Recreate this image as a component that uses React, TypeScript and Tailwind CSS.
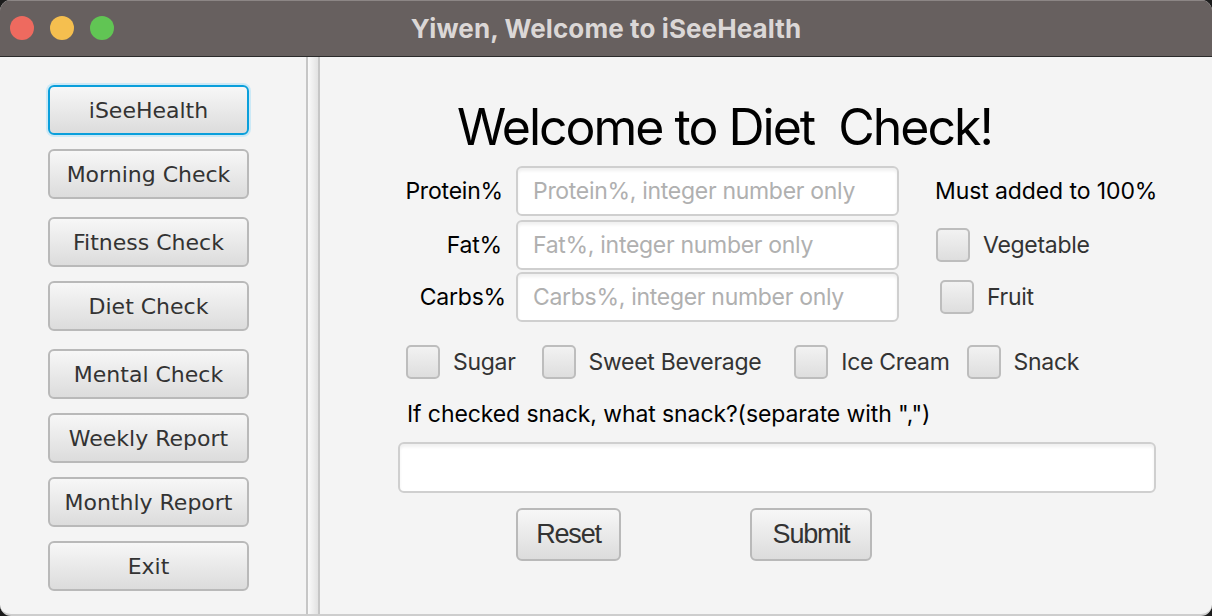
import React from 'react';

const sideButtons = [
  'iSeeHealth',
  'Morning Check',
  'Fitness Check',
  'Diet Check',
  'Mental Check',
  'Weekly Report',
  'Monthly Report',
  'Exit',
];

// gaps between left buttons (px above each one)
const sideGaps = ['mt-[28px]', 'mt-[14px]', 'mt-[18px]', 'mt-[14px]', 'mt-[18px]', 'mt-[14px]', 'mt-[14px]', 'mt-[14px]'];

function CheckBox({ label, className = '' }: { label: string; className?: string }) {
  return (
    <div className={`flex items-center ${className}`}>
      <div className="w-[34px] h-[34px] rounded-[5px] border-2 border-[#bdbdbd] bg-gradient-to-b from-[#f2f2f2] to-[#dedede]" />
      <span className="ml-[13px] text-[23px] tracking-[-0.3px] text-[#333] leading-none">{label}</span>
    </div>
  );
}

function Field({ placeholder, className = '' }: { placeholder?: string; className?: string }) {
  return (
    <div
      className={`h-[50px] rounded-[6px] border-2 border-[#cfcfcf] bg-white shadow-[inset_0_3px_3px_rgba(0,0,0,0.06)] flex items-center px-[15px] text-[23px] tracking-[-0.3px] text-[#b0b0b0] ${className}`}
    >
      {placeholder}
    </div>
  );
}

export default function App() {
  return (
    <div className="w-[1212px] h-[616px] bg-[#1c1c1c] overflow-hidden">
      <div className="w-full h-full rounded-[11px] overflow-hidden bg-[#f4f4f4] flex flex-col border-b-2 border-[#cdcdcd]">
        {/* Title bar */}
        <div className="h-[57px] shrink-0 bg-[#67605f] border-t border-[#8c8685] border-b border-b-[#2b2b2b] relative flex items-center justify-center">
          <div className="absolute left-[10px] top-[15px] flex gap-[16px]">
            <div className="w-[24px] h-[24px] rounded-full bg-[#ee6a5f]" />
            <div className="w-[24px] h-[24px] rounded-full bg-[#f5bf4f]" />
            <div className="w-[24px] h-[24px] rounded-full bg-[#61c554]" />
          </div>
          <span className="text-[26px] font-bold text-[#dbd7d6] font-['Inter',sans-serif] tracking-[0.1px]">
            Yiwen, Welcome to iSeeHealth
          </span>
        </div>

        <div className="flex flex-1">
          {/* Left menu */}
          <div className="w-[306px] shrink-0 flex flex-col items-start pl-[48px] font-['DejaVu_Sans',sans-serif]">
            {sideButtons.map((b, i) => (
              <div
                key={b}
                className={`${sideGaps[i]} w-[201px] h-[50px] shrink-0 rounded-[6px] border-2 flex items-center justify-center text-[22px] text-[#333] bg-gradient-to-b from-[#f7f7f7] to-[#dcdcdc] ${
                  i === 0 ? 'border-[#0a9fdb] shadow-[0_0_0_2px_#cce9f6]' : 'border-[#b9b9b9]'
                }`}
              >
                {b}
              </div>
            ))}
          </div>

          {/* Split divider */}
          <div className="flex shrink-0">
            <div className="w-[2px] bg-[#c6c6c6]" />
            <div className="w-[10px] bg-gradient-to-r from-[#fafafa] to-[#e2e2e2]" />
            <div className="w-[2px] bg-[#c6c6c6]" />
          </div>

          {/* Diet check form */}
          <div className="flex-1 flex flex-col font-['Inter',sans-serif] text-black">
            <h1 className="mt-[40px] ml-[137px] text-[50px] leading-[60px] font-normal tracking-[-2px]">
              Welcome to Diet&nbsp; Check!
            </h1>

            <div className="mt-[9px] flex items-center h-[50px]">
              <span className="w-[183px] text-right text-[23px] tracking-[-0.2px]">Protein%</span>
              <Field className="ml-[13px] w-[383px]" placeholder="Protein%, integer number only" />
              <span className="ml-[36px] text-[23px] tracking-[-0.1px]">Must added to 100%</span>
            </div>
            <div className="mt-[4px] flex items-center h-[50px]">
              <span className="w-[182px] text-right text-[23px] tracking-[-0.2px]">Fat%</span>
              <Field className="ml-[14px] w-[383px]" placeholder="Fat%, integer number only" />
              <CheckBox className="ml-[37px]" label="Vegetable" />
            </div>
            <div className="mt-[2px] flex items-center h-[50px]">
              <span className="w-[186px] text-right text-[23px] tracking-[-0.2px]">Carbs%</span>
              <Field className="ml-[10px] w-[383px]" placeholder="Carbs%, integer number only" />
              <CheckBox className="ml-[41px]" label="Fruit" />
            </div>

            <div className="mt-[23px] flex items-center h-[34px] pl-[86px]">
              <CheckBox label="Sugar" />
              <CheckBox className="ml-[26px]" label="Sweet Beverage" />
              <CheckBox className="ml-[33px]" label="Ice Cream" />
              <CheckBox className="ml-[17px]" label="Snack" />
            </div>

            <p className="mt-[22px] ml-[87px] text-[23px] leading-[26px] tracking-[-0.1px]">
              If checked snack, what snack?(separate with &quot;,&quot;)
            </p>

            <Field className="mt-[15px] ml-[78px] w-[758px] h-[51px]" />

            <div className="mt-[15px] flex font-['Liberation_Sans',sans-serif]">
              <div className="ml-[196px] w-[105px] h-[53px] rounded-[6px] border-2 border-[#b9b9b9] bg-gradient-to-b from-[#f7f7f7] to-[#dcdcdc] flex items-center justify-center text-[27px] tracking-[-1.2px] text-[#333]">
                Reset
              </div>
              <div className="ml-[129px] w-[122px] h-[53px] rounded-[6px] border-2 border-[#b9b9b9] bg-gradient-to-b from-[#f7f7f7] to-[#dcdcdc] flex items-center justify-center text-[27px] tracking-[-1.2px] text-[#333]">
                Submit
              </div>
            </div>
          </div>
        </div>
      </div>
    </div>
  );
}
